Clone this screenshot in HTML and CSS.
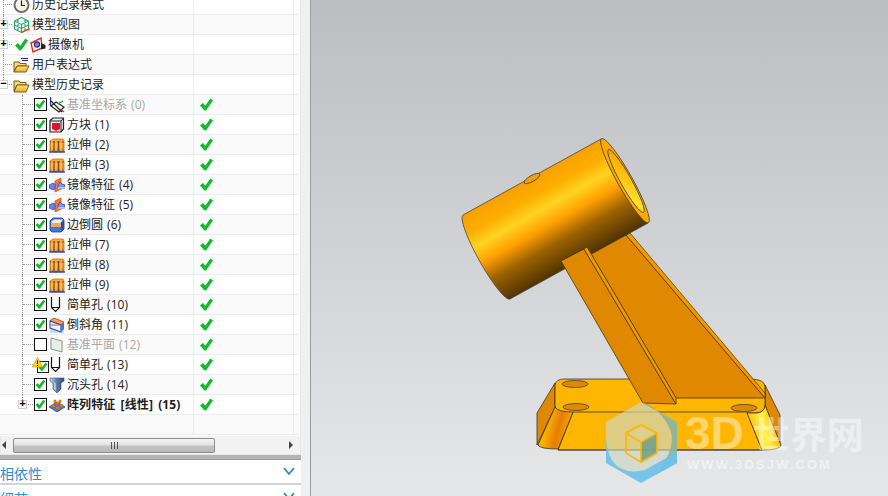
FILE: index.html
```html
<!DOCTYPE html>
<html lang="zh">
<head>
<meta charset="utf-8">
<title>部件导航器</title>
<link rel="stylesheet" href="styles.css">
</head>
<body>
<svg class="defs" aria-hidden="true">
  <defs>
    <linearGradient id="folderG" x1="0" y1="0" x2="0" y2="1"><stop offset="0" stop-color="#ffe68a"/><stop offset="1" stop-color="#f0a818"/></linearGradient>
    <linearGradient id="extG" x1="0" y1="0" x2="0" y2="1"><stop offset="0" stop-color="#f8b040"/><stop offset=".75" stop-color="#f08a10"/><stop offset="1" stop-color="#3a60c0"/></linearGradient>
    <linearGradient id="cbG" x1="0" y1="0" x2="1" y2="0"><stop offset="0" stop-color="#c8d4e8"/><stop offset=".5" stop-color="#5a7aa8"/><stop offset="1" stop-color="#2c4a78"/></linearGradient>
    <symbol id="i-ok" viewBox="0 0 13 13"><path d="M0 7.500L3 5l2.300 2.800L10.300 .5 13 2.500 6 12.500H4.500z" fill="#14b82c"/></symbol>
    <symbol id="i-cb" viewBox="0 0 13 13"><rect x=".5" y=".5" width="12" height="12" fill="#fff" stroke="#111"/><path d="M1.500 7L3.700 5l1.600 2 4-5.300 2 1.500-5.500 7.500H4.800z" fill="#14b82c"/></symbol>
    <symbol id="i-cb0" viewBox="0 0 13 13"><rect x=".5" y=".5" width="12" height="12" fill="#fff" stroke="#111"/></symbol>
    <symbol id="i-clock" viewBox="0 0 16 16"><circle cx="8" cy="8" r="7" fill="#fff" stroke="#6e6e6e" stroke-width="2"/><circle cx="8" cy="8" r="5" fill="#f6f1e2"/><path d="M8 3.500v5h3.500" fill="none" stroke="#222" stroke-width="1.200"/></symbol>
    <symbol id="i-view" viewBox="0 0 16 16"><path d="M8 .5l7 3.500v8l-7 3.500-7-3.500V4zM1 4l7 3.500L15 4M8 7.500v8M4.500 2.300v11.500M11.500 2.300v11.500M1 8l7 3.500L15 8" fill="none" stroke="#1fa86a" stroke-width="1.100"/><path d="M8 15.500l6-3" stroke="#f0541c" stroke-width="1.600"/><path d="M16 10.500v3h-3z" fill="#f0541c"/></symbol>
    <symbol id="i-cam" viewBox="0 0 16 16"><path d="M1 6l10-5 1 10-9 4z" fill="#fff" stroke="#e0301c" stroke-width="1.400"/><circle cx="7" cy="7.500" r="2.600" fill="#7d88d8" stroke="#23278c" stroke-width="1.100"/><path d="M11 6l4.500 2v3.500L11 12.500z" fill="#222"/></symbol>
    <symbol id="i-folder" viewBox="0 0 17 16"><path d="M1 4h5l1 1.500h6V8H4L1 14z" fill="#f5d878" stroke="#7a5a10"/><path d="M4 8h12l-3 7H1z" fill="url(#folderG)" stroke="#7a5a10"/></symbol>
    <symbol id="i-expr" viewBox="0 0 17 16"><path d="M1 5h5l1 1.500h6V9H4l-3 5.500z" fill="#f5d878" stroke="#7a5a10"/><path d="M4 9h12l-3 6H1z" fill="url(#folderG)" stroke="#7a5a10"/><path d="M8 1.500h7M9 3.500h6" stroke="#23237a" stroke-width="1.100"/></symbol>
    <symbol id="i-csys" viewBox="0 0 16 16"><path d="M1.500 0v9" stroke="#1d2bd0" stroke-width="1.200"/><path d="M2 4l11 11M2 9l5-4 8 5-5 5z" fill="none" stroke="#222" stroke-width="1.200"/><path d="M9 7l5-3" stroke="#1f9c3a" stroke-width="1.400"/><path d="M11 12l4 3" stroke="#c83030" stroke-width="1.400"/></symbol>
    <symbol id="i-block" viewBox="0 0 16 16"><path d="M1 3.500L4 1h10.500v11L12 15H1z" fill="#eee" stroke="#222" stroke-width="1.200"/><path d="M1.500 4h10.500v10.500M12 4l2.500-3" fill="none" stroke="#222"/><path d="M3 6h8v6l-4 2-4-2z" fill="#e8102c"/></symbol>
    <symbol id="i-ext" viewBox="0 0 16 16"><path d="M1 4l3-2h10l1 2v11H1z" fill="url(#extG)" stroke="#d86c00" stroke-width=".8"/><path d="M1 5h14M5 4v11M9.500 4v11" stroke="#8a4a10" stroke-width="1"/><path d="M3 4v10M7 4v10M12 4v10" stroke="#ffd890" stroke-width="1"/><path d="M0 15h16" stroke="#2c50c0" stroke-width="1.400"/></symbol>
    <symbol id="i-mir" viewBox="0 0 16 16"><path d="M6 4l6-3v11l-6 3z" fill="#f07a28" stroke="#e05010" stroke-width=".8"/><path d="M0 8l4-2 2 1v5l-2 1-4-2z" fill="#6a80e8" stroke="#3040b0" stroke-width=".6"/><path d="M9 8l2-3 2 2 3 1v3l-4 1-3-1z" fill="#8090f0" stroke="#3040b0" stroke-width=".8"/><path d="M9 11h7" stroke="#fff" stroke-width="1"/></symbol>
    <symbol id="i-blend" viewBox="0 0 16 16"><path d="M1 4l3-3h9l2 2v9l-3 3H3l-2-2z" fill="#3a7ad8" stroke="#1c3e90" stroke-width=".8"/><path d="M2 5l3-2.500h9L11.500 6H3z" fill="#f5efe0"/><path d="M2 6h10v4H2z" fill="#f0a868"/><path d="M12 6l3-3v8l-3 3z" fill="#1c50b0"/></symbol>
    <symbol id="i-hole" viewBox="0 0 16 16"><path d="M2.500 0v10.500l4 4 4-4V0M2.500 10.500h8" fill="none" stroke="#111" stroke-width="1.200"/></symbol>
    <symbol id="i-cham" viewBox="0 0 16 16"><path d="M1 1l14 4v11H1z" fill="#c8ddf5"/><path d="M1 4l4-3 10 4-3 3z" fill="#f0a050" stroke="#e05030" stroke-width="1"/><path d="M1 4v7l11 4V8z" fill="#eaf2fb" stroke="#1c50c0" stroke-width="1.100"/><path d="M12 8l3-3v7l-3 3z" fill="#3a78d8"/><path d="M2 8h9" stroke="#e05030" stroke-width="1"/></symbol>
    <symbol id="i-plane" viewBox="0 0 16 16"><path d="M2 1l11 3v11L2 12z" fill="#e6f0e6" stroke="#8a968a" stroke-width="1"/></symbol>
    <symbol id="i-warn" viewBox="0 0 11 11"><path d="M5.500 .5L10.700 10H.3z" fill="#ffd21e" stroke="#c89a10" stroke-width=".7"/><path d="M5.500 3.500v3.500M5.500 8v1" stroke="#222" stroke-width="1.100"/></symbol>
    <symbol id="i-cbore" viewBox="0 0 16 16"><path d="M1 1h14v3l-3 2v6l-4 4-4-4V6L1 4z" fill="url(#cbG)" stroke="#3a5480" stroke-width=".6"/><path d="M6 6v7" stroke="#e8eef8" stroke-width="1"/></symbol>
    <symbol id="i-pat" viewBox="0 0 16 16"><path d="M0 10l8-5 8 5-8 5z" fill="#4f78dc" stroke="#243f98" stroke-width=".7"/><path d="M3 8h3v2H3zM7 5h3v2H7zM7 10h3v2H7zM11 7.500h3v2h-3zM5 3h2v3H5zM10 3h2v3h-2z" fill="#ee8a1c" stroke="#b85a08" stroke-width=".5"/></symbol>
  </defs>
</svg>

<div class="app">
  <aside class="side">
    <div class="tree">
      <div class="row root"><span class="name"><svg class="ic rooticon"><use href="#i-clock"/></svg><span class="t">历史记录模式</span></span><span class="state"></span></div>
      <div class="row root"><span class="exp">+</span><span class="name"><svg class="ic rooticon"><use href="#i-view"/></svg><span class="t">模型视图</span></span><span class="state"></span></div>
      <div class="row root cam"><span class="exp">+</span><span class="name"><svg class="ok"><use href="#i-ok"/></svg><svg class="ic"><use href="#i-cam"/></svg><span class="t">摄像机</span></span><span class="state"></span></div>
      <div class="row root"><span class="name"><svg class="ic rooticon"><use href="#i-expr"/></svg><span class="t">用户表达式</span></span><span class="state"></span></div>
      <div class="row root endroot"><span class="exp">−</span><span class="name"><svg class="ic rooticon"><use href="#i-folder"/></svg><span class="t">模型历史记录</span></span><span class="state"></span></div>

      <div class="row kid"><span class="name"><svg class="cb"><use href="#i-cb"/></svg><svg class="ic"><use href="#i-csys"/></svg><span class="t off">基准坐标系 (0)</span></span><span class="state"><svg class="ok"><use href="#i-ok"/></svg></span></div>
      <div class="row kid"><span class="name"><svg class="cb"><use href="#i-cb"/></svg><svg class="ic"><use href="#i-block"/></svg><span class="t">方块 (1)</span></span><span class="state"><svg class="ok"><use href="#i-ok"/></svg></span></div>
      <div class="row kid"><span class="name"><svg class="cb"><use href="#i-cb"/></svg><svg class="ic"><use href="#i-ext"/></svg><span class="t">拉伸 (2)</span></span><span class="state"><svg class="ok"><use href="#i-ok"/></svg></span></div>
      <div class="row kid"><span class="name"><svg class="cb"><use href="#i-cb"/></svg><svg class="ic"><use href="#i-ext"/></svg><span class="t">拉伸 (3)</span></span><span class="state"><svg class="ok"><use href="#i-ok"/></svg></span></div>
      <div class="row kid"><span class="name"><svg class="cb"><use href="#i-cb"/></svg><svg class="ic"><use href="#i-mir"/></svg><span class="t">镜像特征 (4)</span></span><span class="state"><svg class="ok"><use href="#i-ok"/></svg></span></div>
      <div class="row kid"><span class="name"><svg class="cb"><use href="#i-cb"/></svg><svg class="ic"><use href="#i-mir"/></svg><span class="t">镜像特征 (5)</span></span><span class="state"><svg class="ok"><use href="#i-ok"/></svg></span></div>
      <div class="row kid"><span class="name"><svg class="cb"><use href="#i-cb"/></svg><svg class="ic"><use href="#i-blend"/></svg><span class="t">边倒圆 (6)</span></span><span class="state"><svg class="ok"><use href="#i-ok"/></svg></span></div>
      <div class="row kid"><span class="name"><svg class="cb"><use href="#i-cb"/></svg><svg class="ic"><use href="#i-ext"/></svg><span class="t">拉伸 (7)</span></span><span class="state"><svg class="ok"><use href="#i-ok"/></svg></span></div>
      <div class="row kid"><span class="name"><svg class="cb"><use href="#i-cb"/></svg><svg class="ic"><use href="#i-ext"/></svg><span class="t">拉伸 (8)</span></span><span class="state"><svg class="ok"><use href="#i-ok"/></svg></span></div>
      <div class="row kid"><span class="name"><svg class="cb"><use href="#i-cb"/></svg><svg class="ic"><use href="#i-ext"/></svg><span class="t">拉伸 (9)</span></span><span class="state"><svg class="ok"><use href="#i-ok"/></svg></span></div>
      <div class="row kid"><span class="name"><svg class="cb"><use href="#i-cb"/></svg><svg class="ic"><use href="#i-hole"/></svg><span class="t">简单孔 (10)</span></span><span class="state"><svg class="ok"><use href="#i-ok"/></svg></span></div>
      <div class="row kid"><span class="name"><svg class="cb"><use href="#i-cb"/></svg><svg class="ic"><use href="#i-cham"/></svg><span class="t">倒斜角 (11)</span></span><span class="state"><svg class="ok"><use href="#i-ok"/></svg></span></div>
      <div class="row kid"><span class="name"><svg class="cb"><use href="#i-cb0"/></svg><svg class="ic"><use href="#i-plane"/></svg><span class="t off">基准平面 (12)</span></span><span class="state"><svg class="ok"><use href="#i-ok"/></svg></span></div>
      <div class="row kid warned"><span class="name"><svg class="badge"><use href="#i-warn"/></svg><svg class="cb"><use href="#i-cb"/></svg><svg class="ic"><use href="#i-hole"/></svg><span class="t">简单孔 (13)</span></span><span class="state"><svg class="ok"><use href="#i-ok"/></svg></span></div>
      <div class="row kid"><span class="name"><svg class="cb"><use href="#i-cb"/></svg><svg class="ic"><use href="#i-cbore"/></svg><span class="t">沉头孔 (14)</span></span><span class="state"><svg class="ok"><use href="#i-ok"/></svg></span></div>
      <div class="row kid last"><span class="exp">+</span><span class="name"><svg class="cb"><use href="#i-cb"/></svg><svg class="ic"><use href="#i-pat"/></svg><span class="t strong">阵列特征 [线性] (15)</span></span><span class="state"><svg class="ok"><use href="#i-ok"/></svg></span></div>
      <div class="row blank"><span class="name"></span><span class="state"></span></div>
    </div>

    <div class="hscroll">
      <span class="arrow arrow-l"></span>
      <span class="thumb"><span class="grip"></span></span>
      <span class="arrow arrow-r"></span>
    </div>
    <div class="sash"></div>
    <div class="section">
      <span class="sec-title">相依性</span>
      <svg class="chev" viewBox="0 0 12 8"><path d="M1 1l5 6 5-6" fill="none" stroke="#2c8cc4" stroke-width="1.800"/></svg>
    </div>
    <div class="sec-sep"></div>
    <div class="section">
      <span class="sec-title">细节</span>
      <svg class="chev" viewBox="0 0 12 8"><path d="M1 1l5 6 5-6" fill="none" stroke="#2c8cc4" stroke-width="1.800"/></svg>
    </div>
  </aside>

  <div class="gutter"></div>

  <svg class="view" viewBox="311 0 577 496" preserveAspectRatio="none">
    <defs>
      <linearGradient id="bg" x1="0" y1="0" x2="0" y2="1"><stop offset="0" stop-color="#bcbdc0"/><stop offset="1" stop-color="#e6e7e9"/></linearGradient>
      <linearGradient id="cyl" gradientUnits="userSpaceOnUse" x1="601" y1="139" x2="648" y2="223">
        <stop offset="0" stop-color="#f7a200"/><stop offset=".18" stop-color="#ffad00"/><stop offset=".34" stop-color="#ffd421"/><stop offset=".52" stop-color="#ff9f00"/><stop offset=".72" stop-color="#9c6200"/><stop offset="1" stop-color="#4f3200"/>
      </linearGradient>
      <linearGradient id="bore" gradientUnits="userSpaceOnUse" x1="607" y1="150" x2="643" y2="212">
        <stop offset="0" stop-color="#b87400"/><stop offset=".35" stop-color="#ffb400"/><stop offset=".7" stop-color="#ffe030"/><stop offset="1" stop-color="#ffb000"/>
      </linearGradient>
      <linearGradient id="fil1" gradientUnits="userSpaceOnUse" x1="545" y1="430" x2="572" y2="437">
        <stop offset="0" stop-color="#ffb400"/><stop offset=".45" stop-color="#e87c00"/><stop offset="1" stop-color="#ffb800"/>
      </linearGradient>
      <linearGradient id="fil2" gradientUnits="userSpaceOnUse" x1="750" y1="437" x2="778" y2="430">
        <stop offset="0" stop-color="#ffb400"/><stop offset=".55" stop-color="#fff24a"/><stop offset="1" stop-color="#ffb800"/>
      </linearGradient>
    </defs>
    <rect class="backdrop" x="311" y="0" width="577" height="496" fill="url(#bg)"/>

    <g class="model">
      <path class="side-dark" d="M555 383L537 413V445L555 407Z"/>
      <path class="side-dark" d="M765 385L780 415V445L765 405Z"/>
      <path class="base-top" d="M555 385Q556 379 564 379H750Q765 379 765 387V405Q765 413 755 413H566Q555 412 555 405Z"/>
      <path class="base-top" d="M573 412H747L762 450H558Z"/>
      <path d="M555 407Q558 412 573 412L558 449Q540 449 538 445Z" fill="url(#fil1)" stroke="#333" stroke-width=".8"/>
      <path d="M747 413L757 413Q765 412 765 405L781 445Q781 450 762 450Z" fill="url(#fil2)" stroke="#333" stroke-width=".8"/>
      <path class="edge" d="M558 450H762"/>
      <ellipse class="hole" cx="575" cy="384" rx="13" ry="3.500"/>
      <ellipse class="hole" cx="576" cy="407" rx="13" ry="3.500"/>
      <ellipse class="hole" cx="744" cy="408" rx="13" ry="3.500"/>

      <path class="web" d="M587 247L626 235L765 398H676Z"/>
      <path class="stripe" d="M626 235L630 233L765 393V398Z"/>

      <path d="M463 215L601 139L648 223L510 299A48 8 60.800 0 1 463 215Z" fill="url(#cyl)" stroke="#444" stroke-width=".8"/>
      <ellipse class="cap" cx="625" cy="180.700" rx="48.200" ry="7.500" transform="rotate(60.800 625 180.700)"/>
      <ellipse cx="626" cy="181" rx="36" ry="5.500" transform="rotate(60.800 626 181)" fill="url(#bore)" stroke="#444" stroke-width=".8"/>
      <ellipse class="pin" cx="532" cy="178.500" rx="9" ry="3" transform="rotate(-30 532 178.500)"/>

      <path class="web" d="M561 261L584 249L676 404L643 403Z"/>
      <path class="stripe" d="M584 249L587 247L676 398V404Z"/>
    </g>

    <g class="mark">
      <path class="m-hex" d="M641 402L677 422V463L641 483L606 463V422Z"/>
      <path class="m-r" d="M641 402L677 422V463L655 475Q680 445 668 425T641 402Z"/>
      <path class="m-b" d="M606 440Q610 478 645 470L677 452V463L641 483L606 463Z"/>
      <path class="m-cube-l" d="M626 433L641 425L657 433L641 442Z"/>
      <path class="m-cube-d" d="M641 442L657 433V453L641 462Z"/>
      <path class="m-edge" d="M626 433L641 425L657 433V453L641 462L626 453ZM626 433L641 442L657 433M641 442V462"/>
      <text class="wm-big" x="685" y="449">3D<tspan class="wm-cjk" dx="9">世界网</tspan></text>
      <text class="wm-url" x="687" y="469">WWW.3DSJW.COM</text>
    </g>
  </svg>
</div>
</body>
</html>
```
FILE: styles.css
```css
* { box-sizing: border-box; }
html, body { margin: 0; padding: 0; height: 100%; overflow: hidden; background: #f0f0f0; }
body { font-family: "Open Sans", "Noto Sans CJK SC", sans-serif; font-size: 12px; color: #222; }
.defs { position: absolute; width: 0; height: 0; overflow: hidden; }

.app { display: flex; height: 496px; overflow: hidden; }
.side { width: 301px; flex: none; display: flex; flex-direction: column; background: #fff; overflow: hidden; }
.gutter { width: 10px; flex: none; background: #f0f0f0; border-right: 1px solid #9c9c9c; }
.view { flex: 1; height: 496px; display: block; }

/* tree */
.tree { height: 441px; flex: none; margin-top: -5px; overflow: hidden; padding-right: 1px; border-right: 1px solid #e6e6e6; }
.row { position: relative; display: flex; height: 20px; border-bottom: 1px solid #ececec; background: #fff; }
.row:nth-child(even) { background: #fafafa; }
.name { width: 194px; flex: none; display: flex; align-items: center; gap: 2px; border-right: 1px solid #ececec; white-space: nowrap; }
.state { width: 100px; flex: none; display: flex; align-items: center; padding-left: 6px; border-right: 1px solid #ececec; }
.t { line-height: 16px; word-spacing: 1px; }
.t.off { color: #a9a9a9; }
.t.strong { font-weight: 700; color: #1c1c1c; word-spacing: 2px; letter-spacing: .1px; }

.ic { width: 16px; height: 16px; flex: none; }
.cb { width: 13px; height: 13px; flex: none; }
.ok { width: 13px; height: 13px; flex: none; }
.root .name { padding-left: 13px; }
.rooticon { width: 17px; }
.cam .name { padding-left: 15px; }
.kid .name { padding-left: 34px; }
.blank .name { padding-left: 0; }

/* tree guides */
.root::before { content: ""; position: absolute; left: 3px; top: 0; bottom: -1px; border-left: 1px dotted #999; }
.endroot::before { bottom: 10px; }
.root::after { content: ""; position: absolute; left: 3px; width: 9px; top: 9px; border-top: 1px dotted #999; }
.kid::before { content: ""; position: absolute; left: 22px; top: 0; bottom: -1px; border-left: 1px dotted #999; }
.last::before { bottom: 10px; }
.kid::after { content: ""; position: absolute; left: 23px; width: 10px; top: 9px; border-top: 1px dotted #999; }
.exp {
  position: absolute; z-index: 1; top: 5px; left: -1px; width: 9px; height: 9px;
  background: #fff; border: 1px solid #d0d0d0;
  font: 700 11px/7px "Liberation Mono", monospace; text-align: center; color: #000;
}
.kid .exp { left: 18px; }

.warned .cb { width: 12px; height: 12px; margin: 5px -2px 0 3px; }
.badge { position: absolute; left: 32px; top: 2px; width: 11px; height: 11px; z-index: 1; }

/* horizontal scrollbar */
.hscroll { height: 19px; flex: none; display: flex; align-items: center; justify-content: space-between; padding: 0 7px 0 1px; background: #f2f2f2; border: 1px solid #e8e8e8; border-top: 0; }
.thumb {
  width: 202px; height: 15px; margin-left: 7px; margin-right: auto; flex: none;
  display: flex; align-items: center; justify-content: center;
  border: 1px solid #8e8e8e; border-radius: 2px;
  background: linear-gradient(#f4f4f4 0, #e2e2e2 45%, #c4c4c4 55%, #b8b8b8 100%);
}
.grip { width: 7px; height: 7px; background: repeating-linear-gradient(90deg, #555 0 1px, transparent 1px 3px); }
.arrow { width: 0; height: 0; border-top: 4px solid transparent; border-bottom: 4px solid transparent; flex: none; }
.arrow-l { border-right: 4px solid #444; }
.arrow-r { border-left: 4px solid #444; }

/* collapsed sections */
.sash { height: 5px; flex: none; background: #b4b4b4; border-bottom: 1px solid #9a9a9a; }
.section { height: 23px; flex: none; display: flex; align-items: center; justify-content: space-between; padding: 4px 6px 0 0; background: #fff; }
.sec-sep { height: 2px; flex: none; background: #d4d4d4; }
.sec-title { font-size: 14px; line-height: 20px; color: #2f8fc6; }
.chev { width: 12px; height: 8px; flex: none; margin-bottom: 5px; }

/* 3D model */
.edge { stroke: #333; stroke-width: .8; fill: none; }
.side-dark { fill: #e08900; stroke: #333; stroke-width: .8; }
.base-top { fill: #ffb600; stroke: #333; stroke-width: .8; }
.hole { fill: #e08900; stroke: #444; stroke-width: .8; }
.web { fill: #e08900; stroke: #4a3500; stroke-width: .8; }
.stripe { fill: #f09a00; stroke: #4a3500; stroke-width: .7; }
.cap { fill: #ffa800; stroke: #444; stroke-width: .8; }
.pin { fill: #f0a000; stroke: #444; stroke-width: .8; }

/* watermark */
.m-hex { fill: #cfd6c4; fill-opacity: .68; }
.m-r { fill: #7fb09c; fill-opacity: .8; }
.m-b { fill: #6cc2ec; fill-opacity: .92; }
.m-cube-l { fill: #d8d29a; fill-opacity: .6; }
.m-cube-d { fill: #6f9f8a; fill-opacity: .85; }
.m-edge { fill: none; stroke: #ffb600; stroke-width: 2; stroke-opacity: .85; }
.wm-big { font-family: "Liberation Sans", "Noto Sans CJK SC", sans-serif; font-size: 46px; font-weight: 700; fill: #fff; fill-opacity: .45; }
.wm-cjk { font-family: "Noto Sans CJK SC", sans-serif; font-size: 37px; }
.wm-url { font-family: "Liberation Sans", sans-serif; font-size: 13px; font-weight: 700; letter-spacing: 2.100px; fill: #fff; fill-opacity: .5; }
```
